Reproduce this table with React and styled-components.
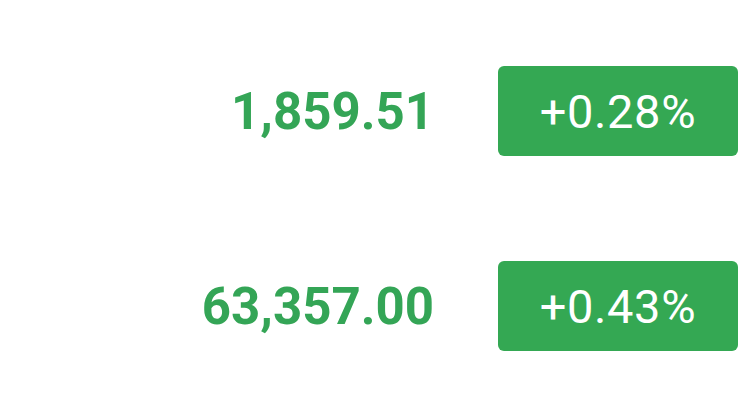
import styled, { createGlobalStyle } from "styled-components";

const GlobalStyle = createGlobalStyle`
    html, body {
        margin: 0;
        padding: 0;
        background: #ffffff;
    }
    body {
        font-family: Roboto, "Noto Sans", sans-serif;
    }
`;

const Page = styled.div`
    width: 744px;
    height: 404px;
    box-sizing: border-box;
    padding: 66px 6px 0 0;
    display: flex;
    flex-direction: column;
    gap: 105px;
`;

const Row = styled.div`
    display: flex;
    justify-content: flex-end;
    align-items: center;
    gap: 64px;
    height: 90px;
`;

const Price = styled.div`
    font-size: 51px;
    font-weight: 700;
    color: #34a556;
    line-height: 1;
`;

const Change = styled.div`
    width: 240px;
    height: 90px;
    border-radius: 6px;
    background: ${(p) => (p.$down ? "#e53935" : "#34a853")};
    color: #ffffff;
    font-size: 47px;
    font-weight: 400;
    letter-spacing: 0.6px;
    display: flex;
    align-items: center;
    justify-content: center;
`;

const rows = [
    { price: "1,859.51", change: "+0.28%" },
    { price: "63,357.00", change: "+0.43%" },
];

export default function App() {
    return (
        <>
            <GlobalStyle />
            <Page>
                {rows.map((r) => (
                    <Row key={r.price}>
                        <Price>{r.price}</Price>
                        <Change>{r.change}</Change>
                    </Row>
                ))}
            </Page>
        </>
    );
}
